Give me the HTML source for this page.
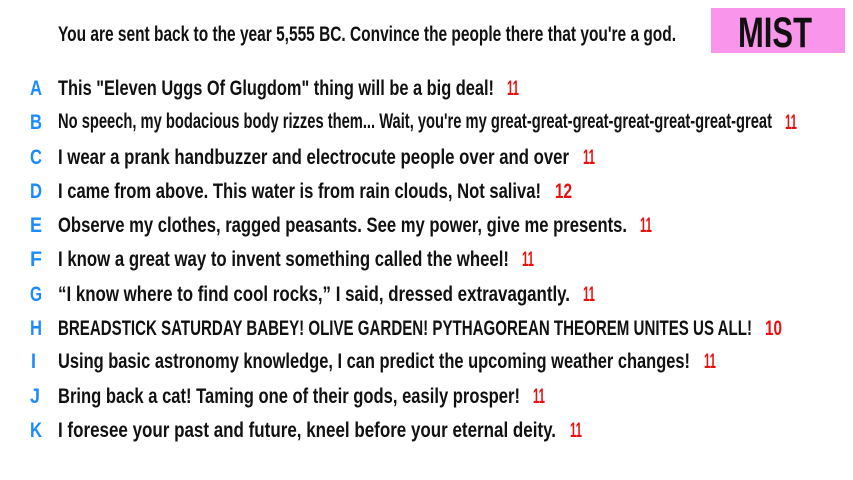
<!DOCTYPE html>
<html><head><meta charset="utf-8"><style>
html,body{margin:0;padding:0;background:#fff;width:853px;height:480px;overflow:hidden}
svg{display:block}
text{font-family:"Liberation Sans Narrow","Liberation Sans",sans-serif;font-weight:bold}
.t{fill:#111;font-size:21px}
.l{fill:#1a8cff;font-size:21px}
.n{fill:#e8100e;font-size:21px}
</style></head><body>
<svg width="853" height="480" viewBox="0 0 853 480">
<rect x="711" y="8" width="134" height="45" fill="#f995ea"/>
<text x="738" y="47" font-size="43" fill="#111" textLength="74" lengthAdjust="spacingAndGlyphs">MIST</text>
<text class="t" x="58" y="41" font-size="20" textLength="618" lengthAdjust="spacingAndGlyphs">You are sent back to the year 5,555 BC. Convince the people there that you're a god.</text>

<text class="l" x="30" y="95" textLength="12" lengthAdjust="spacingAndGlyphs">A</text>
<text class="t" x="58" y="95" textLength="436" lengthAdjust="spacingAndGlyphs">This "Eleven Uggs Of Glugdom" thing will be a big deal!</text>
<text class="n" x="507" y="95" textLength="12" lengthAdjust="spacingAndGlyphs">11</text>

<text class="l" x="30" y="129" textLength="12" lengthAdjust="spacingAndGlyphs">B</text>
<text class="t" x="58" y="128" font-size="18" textLength="714" lengthAdjust="spacingAndGlyphs">No speech, my bodacious body rizzes them... Wait, you're my great-great-great-great-great-great-great</text>
<text class="n" x="785" y="129" textLength="12" lengthAdjust="spacingAndGlyphs">11</text>

<text class="l" x="30" y="164" textLength="12" lengthAdjust="spacingAndGlyphs">C</text>
<text class="t" x="58" y="164" textLength="511" lengthAdjust="spacingAndGlyphs">I wear a prank handbuzzer and electrocute people over and over</text>
<text class="n" x="583" y="164" textLength="12" lengthAdjust="spacingAndGlyphs">11</text>

<text class="l" x="30" y="198" textLength="12" lengthAdjust="spacingAndGlyphs">D</text>
<text class="t" x="58" y="198" textLength="483" lengthAdjust="spacingAndGlyphs">I came from above. This water is from rain clouds, Not saliva!</text>
<text class="n" x="555" y="198" textLength="17" lengthAdjust="spacingAndGlyphs">12</text>

<text class="l" x="30" y="232" textLength="12" lengthAdjust="spacingAndGlyphs">E</text>
<text class="t" x="58" y="232" textLength="569" lengthAdjust="spacingAndGlyphs">Observe my clothes, ragged peasants. See my power, give me presents.</text>
<text class="n" x="640" y="232" textLength="12" lengthAdjust="spacingAndGlyphs">11</text>

<text class="l" x="30" y="266" textLength="12" lengthAdjust="spacingAndGlyphs">F</text>
<text class="t" x="58" y="266" textLength="451" lengthAdjust="spacingAndGlyphs">I know a great way to invent something called the wheel!</text>
<text class="n" x="522" y="266" textLength="12" lengthAdjust="spacingAndGlyphs">11</text>

<text class="l" x="30" y="301" textLength="12" lengthAdjust="spacingAndGlyphs">G</text>
<text class="t" x="58" y="301" textLength="512" lengthAdjust="spacingAndGlyphs">“I know where to find cool rocks,” I said, dressed extravagantly.</text>
<text class="n" x="583" y="301" textLength="12" lengthAdjust="spacingAndGlyphs">11</text>

<text class="l" x="30" y="335" textLength="12" lengthAdjust="spacingAndGlyphs">H</text>
<text class="t" x="58" y="335" textLength="694" lengthAdjust="spacingAndGlyphs">BREADSTICK SATURDAY BABEY! OLIVE GARDEN! PYTHAGOREAN THEOREM UNITES US ALL!</text>
<text class="n" x="765" y="335" textLength="17" lengthAdjust="spacingAndGlyphs">10</text>

<text class="l" x="31" y="368" textLength="5" lengthAdjust="spacingAndGlyphs">I</text>
<text class="t" x="58" y="368" textLength="632" lengthAdjust="spacingAndGlyphs">Using basic astronomy knowledge, I can predict the upcoming weather changes!</text>
<text class="n" x="704" y="368" textLength="12" lengthAdjust="spacingAndGlyphs">11</text>

<text class="l" x="30" y="403" textLength="10" lengthAdjust="spacingAndGlyphs">J</text>
<text class="t" x="58" y="403" textLength="462" lengthAdjust="spacingAndGlyphs">Bring back a cat! Taming one of their gods, easily prosper!</text>
<text class="n" x="533" y="403" textLength="12" lengthAdjust="spacingAndGlyphs">11</text>

<text class="l" x="30" y="437" textLength="12" lengthAdjust="spacingAndGlyphs">K</text>
<text class="t" x="58" y="437" textLength="498" lengthAdjust="spacingAndGlyphs">I foresee your past and future, kneel before your eternal deity.</text>
<text class="n" x="570" y="437" textLength="12" lengthAdjust="spacingAndGlyphs">11</text>
</svg>
</body></html>
